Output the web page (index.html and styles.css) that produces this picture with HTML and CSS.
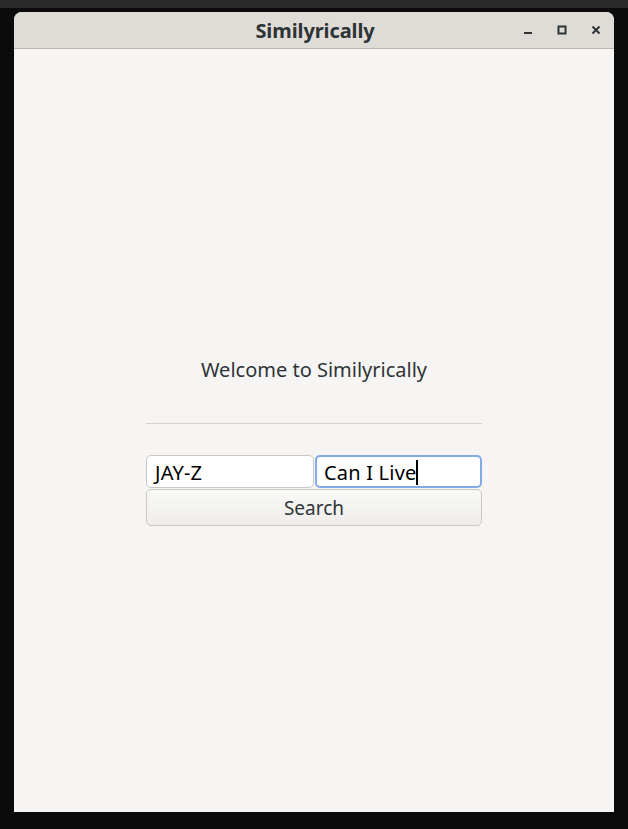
FILE: index.html
```html
<!DOCTYPE html>
<html>
<head>
<meta charset="utf-8">
<link rel="stylesheet" href="styles.css">
</head>
<body>
<div class="topstrip"></div>
<div class="window">
  <div class="titlebar">
    <div class="title">Similyrically</div>
    <div class="controls">
      <span class="ctl"><svg width="10" height="10" viewBox="0 0 10 10"><rect x="1" y="7" width="8" height="2" fill="#2e3436"/></svg></span>
      <span class="ctl"><svg width="10" height="10" viewBox="0 0 10 10"><rect x="1.5" y="1.5" width="7" height="7" fill="none" stroke="#2e3436" stroke-width="2"/></svg></span>
      <span class="ctl"><svg width="10" height="10" viewBox="0 0 10 10"><path d="M1.5 1.5 L8.5 8.5 M8.5 1.5 L1.5 8.5" stroke="#2e3436" stroke-width="2"/></svg></span>
    </div>
  </div>
  <div class="content">
    <div class="form">
      <div class="welcome">Welcome to Similyrically</div>
      <div class="sep"></div>
      <div class="entries">
        <div class="entry">JAY-Z</div>
        <div class="entry focused">Can I Live<span class="caret"></span></div>
      </div>
      <div class="button">Search</div>
    </div>
  </div>
</div>
</body>
</html>
```
FILE: styles.css
```css
html, body {
  margin: 0;
  padding: 0;
  background: #0b0b0b;
  height: 829px;
  overflow: hidden;
  font-family: "Noto Sans", "Open Sans", sans-serif;
}
.topstrip {
  height: 8px;
  background: #2b2b2b;
}
.window {
  margin: 4px 0 0 14px;
  width: 600px;
  height: 800px;
  border-radius: 8px 8px 0 0;
  overflow: hidden;
  background: #f6f5f4;
  display: flex;
  flex-direction: column;
}
.titlebar {
  height: 36px;
  background: #dfdcd8;
  border-bottom: 1px solid #c0b7ae;
  position: relative;
  display: flex;
  align-items: center;
  justify-content: center;
}
.title {
  font-weight: bold;
  font-size: 20px;
  color: #2e3436;
  letter-spacing: -0.1px;
  padding-left: 2px;
}
.controls {
  position: absolute;
  right: 1px;
  top: 0;
  height: 36px;
  display: flex;
  align-items: center;
}
.ctl {
  width: 34px;
  height: 24px;
  display: flex;
  align-items: center;
  justify-content: center;
}
.content {
  flex: 1;
  display: flex;
  justify-content: center;
}
.form {
  width: 336px;
  padding-top: 308px;
  display: flex;
  flex-direction: column;
}
.welcome {
  text-align: center;
  font-size: 20px;
  line-height: 26px;
  color: #2e3436;
}
.sep {
  height: 1px;
  background: #d6d1cd;
  margin-top: 40px;
}
.entries {
  margin-top: 31px;
  display: grid;
  grid-template-columns: 168px 167px;
  column-gap: 1px;
}
.entry {
  box-sizing: border-box;
  height: 33px;
  background: #ffffff;
  border: 1px solid #cdc7c2;
  border-radius: 5px;
  padding: 2px 8px 0;
  font-size: 20px;
  letter-spacing: 0.2px;
  color: #000;
  display: flex;
  align-items: center;
}
.entry.focused {
  border: 2px solid #82aae8;
  padding: 2px 7px 0;
}
.caret {
  display: inline-block;
  width: 2px;
  height: 25px;
  background: #000;
  margin-left: 0;
}
.button {
  box-sizing: border-box;
  margin-top: 1px;
  height: 37px;
  border: 1px solid #cdc7c2;
  border-radius: 5px;
  background: linear-gradient(#f9f9f8, #efedec);
  text-align: center;
  font-size: 19px;
  line-height: 36px;
  color: #2e3436;
}
```
